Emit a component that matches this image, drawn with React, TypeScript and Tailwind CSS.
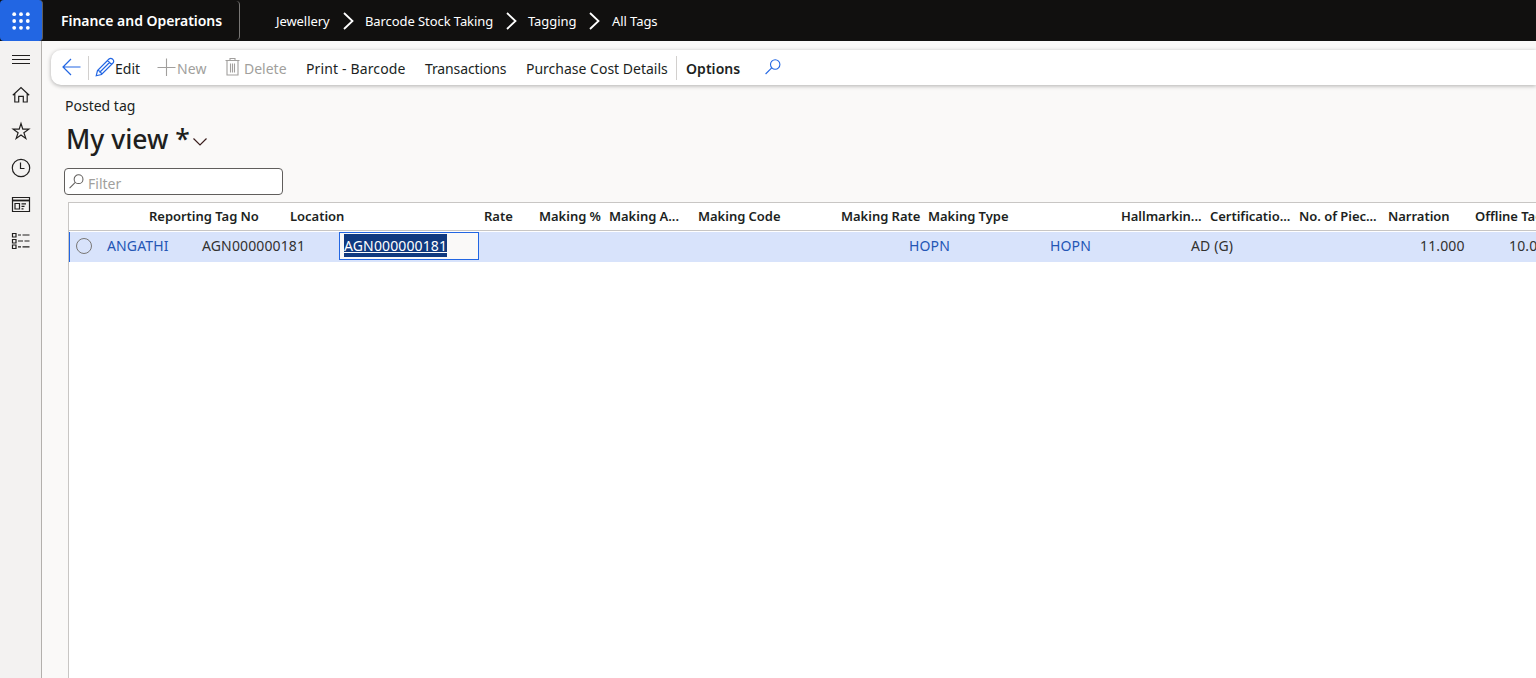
import React from "react";

type Column = { label: string; width: string };

const columns: Column[] = [
  { label: "Reporting Tag No", width: "w-[141px]" },
  { label: "Location", width: "w-[194px]" },
  { label: "Rate", width: "w-[55px]" },
  { label: "Making %", width: "w-[70px]" },
  { label: "Making A...", width: "w-[89px]" },
  { label: "Making Code", width: "w-[143px]" },
  { label: "Making Rate", width: "w-[87px]" },
  { label: "Making Type", width: "w-[193px]" },
  { label: "Hallmarkin...", width: "w-[89px]" },
  { label: "Certificatio...", width: "w-[89px]" },
  { label: "No. of Piec...", width: "w-[89px]" },
  { label: "Narration", width: "w-[87px]" },
  { label: "Offline Tag No", width: "w-[140px]" },
];

const Chevron = () => (
  <svg className="mb-[2px] h-[18px] w-[12px] shrink-0" viewBox="0 0 12 18" fill="none" stroke="#fff" strokeWidth="1.8">
    <path d="M1 1l8.500 8L1 17" />
  </svg>
);

const Search = ({ className }: { className: string }) => (
  <svg className={className} viewBox="0 0 16 16" fill="none" stroke="currentColor" strokeWidth="1.1">
    <circle cx="10.2" cy="5.5" r="4.7" />
    <path d="M6.7 8.9L.6 15" />
  </svg>
);

const icon = "h-5 w-5 shrink-0";

function SideRail() {
  return (
    <nav className="flex w-[42px] shrink-0 flex-col items-center border-r border-[#b3b0ad] bg-[#f3f2f1] pl-px text-[#201f1e]">
      <div className="flex h-[36px] items-center">
        <svg className={icon} viewBox="0 0 20 20" stroke="currentColor" strokeWidth="1">
          <path d="M1 6.500h18M1 10.500h18M1 14.500h18" />
        </svg>
      </div>
      <div className="flex h-[36px] items-center">
        <svg className={icon} viewBox="0 0 20 20" fill="none" stroke="currentColor" strokeWidth="1.200">
          <path d="M1.800 10.300L10 2.500l8.200 7.800M3.800 8.500v8.500h3.900v-5.700h4.600v5.700h3.900V8.500" />
        </svg>
      </div>
      <div className="flex h-[36px] items-center">
        <svg className={icon} viewBox="0 0 20 20" fill="none" stroke="currentColor" strokeWidth="1.200">
          <path d="M10 2.500l1.800 5.700h6l-4.900 3.500 1.900 5.700-4.800-3.500-4.800 3.500 1.900-5.700L2.200 8.200h6z" />
        </svg>
      </div>
      <div className="flex h-[37px] items-center">
        <svg className={icon} viewBox="0 0 20 20" fill="none" stroke="currentColor" strokeWidth="1.200">
          <circle cx="10" cy="10" r="8.700" />
          <path d="M9.500 4.500v6h4" />
        </svg>
      </div>
      <div className="flex h-[37px] items-center">
        <svg className={icon} viewBox="0 0 20 20" fill="none" stroke="currentColor" strokeWidth="1.200">
          <path d="M1.500 2.500h17v14h-17z" />
          <path d="M1.500 5.500h17" strokeWidth="1.800" />
          <path d="M4 8.500h4.500v5.500H4zM10.500 8.800h4.500M10.500 11.300h3M10.500 13.800h2" />
        </svg>
      </div>
      <div className="flex h-[36px] items-center">
        <svg className={icon} viewBox="0 0 20 20" fill="none" stroke="currentColor" strokeWidth="1.200">
          <path d="M1.500 2.500h3.500v3.500H1.500zM1.500 8.500h3.500v3.500H1.500zM1.500 14h3.500v3.500H1.500zM7 4h3M11.500 4h7M7 10h5M13.500 10h5M7 15.800h3M11.500 15.800h7" />
        </svg>
      </div>
    </nav>
  );
}

function TopBar() {
  return (
    <header className="flex h-[41px] shrink-0 items-center bg-[#11100f] text-white">
      <div className="flex h-[41px] w-[43px] shrink-0 items-center justify-center rounded-[4px] border-r border-[#605e5c] bg-[#2266e3]">
        <svg className="h-[18px] w-[18px]" viewBox="0 0 18 18" fill="#fff">
          {[2.2, 9, 15.8].map((y) => [2.2, 9, 15.8].map((x) => <circle key={`${x}-${y}`} cx={x} cy={y} r="1.900" />))}
        </svg>
      </div>
      <div className="flex h-[39px] w-[197px] shrink-0 items-center rounded-r-[4px] border-r border-[#797775] pl-[18px] text-[14px] font-semibold tracking-[-0.04px]">
        Finance and Operations
      </div>
      <div className="flex items-center pl-[36px] pt-[2px] text-[13px] tracking-[-0.08px]">
        <span className="w-[67px]">Jewellery</span>
        <Chevron />
        <span className="w-[151px] pl-[10px]">Barcode Stock Taking</span>
        <Chevron />
        <span className="w-[71px] pl-[10px]">Tagging</span>
        <Chevron />
        <span className="pl-[11px]">All Tags</span>
      </div>
    </header>
  );
}

function ActionBar() {
  return (
    <div className="ml-[9px] mt-[9px] flex h-[35px] shrink-0 items-center rounded-l-[10px] bg-white pl-[11px] text-[14px] shadow-[0_1px_4px_rgba(0,0,0,0.3)]">
      <svg className="mb-[2px] h-[18px] w-[19px]" viewBox="0 0 19 18" fill="none" stroke="#2266e3" strokeWidth="1.200">
        <path d="M18.500 9H1.500M9 1L1 9l8 8" />
      </svg>
      <div className="ml-[7px] h-6 w-px bg-[#d2d0ce]" />
      <svg className="mb-[2px] ml-[6px] h-[20px] w-[20px]" viewBox="0 0 20 20" fill="none" stroke="#2266e3" strokeWidth="1.200">
        <path d="M1.200 18.800l1.300-5.300L14 2a2.400 2.400 0 0 1 3.400 0l.6.600a2.400 2.400 0 0 1 0 3.400L6.500 17.500zM12.500 3.500l4 4M2.500 13.500c2 0 4 2 4 4M4.500 15.500L14.500 5.500" />
      </svg>
      <span className="w-[42px] pt-[2px]">Edit</span>
      <svg className="mb-[2px] h-[18px] w-[19px]" viewBox="0 0 19 18" stroke="#a19f9d" strokeWidth="1.100">
        <path d="M.5 9.500h18M9.500 .5v17.500" />
      </svg>
      <span className="w-[49px] pl-px pt-[2px] tracking-[0.15px] text-[#a19f9d]">New</span>
      <svg className="mb-[2px] h-[20px] w-[15px]" viewBox="0 0 15 20" fill="none" stroke="#a19f9d" strokeWidth="1.100">
        <path d="M.5 3.500h14M2 3.500v14.500h11V3.500M5 3V1.500h5V3M5.500 6.500v9M7.500 6.500v9M9.500 6.500v9" />
      </svg>
      <span className="w-[65px] pl-[4px] pt-[2px] text-[#a19f9d]">Delete</span>
      <span className="w-[119px] pl-px pt-[2px] tracking-[0.14px]">Print - Barcode</span>
      <span className="w-[101px] pl-px pt-[2px] tracking-[-0.12px]">Transactions</span>
      <span className="w-[151px] pl-px pt-[2px]">Purchase Cost Details</span>
      <div className="h-6 w-px bg-[#d2d0ce]" />
      <span className="w-[88px] pl-[9px] pt-[2px] font-semibold tracking-[0.05px]">Options</span>
      <Search className="mb-px h-4 w-4 text-[#2266e3]" />
    </div>
  );
}

function Grid() {
  return (
    <section className="ml-[26px] mt-[7px] flex-1 overflow-hidden border-l border-t border-[#c8c6c4] bg-white">
      <div className="flex h-[28px] items-center border-b border-[#c8c6c4] pl-[80px] text-[13px] font-semibold tracking-[-0.03px]">
        {columns.map((c) => (
          <div key={c.label} className={`${c.width} shrink-0`}>{c.label}</div>
        ))}
      </div>
      <div className="mt-px flex h-[30px] items-start border-l border-[#2266e3] bg-[#d8e3fb] pl-[6px] text-[14px] leading-[28px] tracking-[0.13px] text-[#323130]">
        <div className="mt-[6px] h-4 w-4 shrink-0 rounded-full border-[1.500px] border-[#797775]" />
        <div className="w-[110px] shrink-0 pl-[15px] text-[#2456b5]">ANGATHI</div>
        <div className="w-[137px] shrink-0">AGN000000181</div>
        <div className="flex h-7 w-[140px] shrink-0 items-start border border-[#2266e3] bg-[#faf9f8] pl-[4px] pt-px">
          <span className="h-[23px] bg-[#10397f] leading-[24px] text-white underline">AGN000000181</span>
        </div>
        <div className="w-[571px] shrink-0 pl-[430px] text-[#2456b5]">HOPN</div>
        <div className="w-[141px] shrink-0 text-[#2456b5]">HOPN</div>
        <div className="w-[229px] shrink-0">AD (G)</div>
        <div className="w-[89px] shrink-0">11.000</div>
        <div className="shrink-0">10.000</div>
      </div>
    </section>
  );
}

export default function App() {
  return (
    <div className="flex h-screen flex-col overflow-hidden whitespace-nowrap bg-[#faf9f8] font-['Noto_Sans','Open_Sans',sans-serif] text-[#201f1e]">
      <TopBar />
      <div className="flex min-h-0 flex-1">
        <SideRail />
        <main className="flex min-w-0 flex-1 flex-col">
          <ActionBar />
          <div className="mt-[11px] h-5 pl-[23px] text-[14px] leading-5">Posted tag</div>
          <div className="flex h-[52px] items-start pl-[24px]">
            <h1 className="w-[127px] pt-[4px] text-[26.5px] leading-[38px] font-medium">My view *</h1>
            <svg className="mt-[22px] h-[8px] w-[14px]" viewBox="0 0 14 8" fill="none" stroke="#3b1f1e" strokeWidth="1.200">
              <path d="M.5 .5L7 7l6.500-6.500" />
            </svg>
          </div>
          <label className="ml-[22px] flex h-[27px] w-[219px] shrink-0 items-center rounded-[4px] border border-[#605e5c] bg-white pl-[4px]">
            <Search className="h-[15px] w-[15px] text-[#605e5c]" />
            <span className="pl-[4px] pt-[3px] text-[14px] text-[#a19f9d]">Filter</span>
          </label>
          <Grid />
        </main>
      </div>
    </div>
  );
}
